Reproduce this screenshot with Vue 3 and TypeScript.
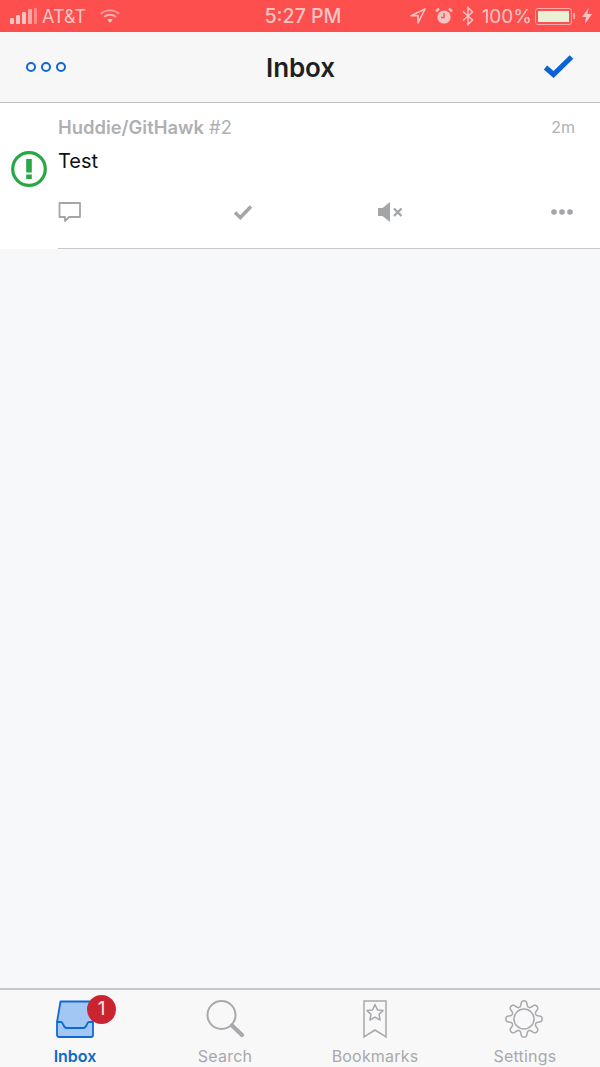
<script setup lang="ts">
const tabs = [
  { key: 'inbox', label: 'Inbox' },
  { key: 'search', label: 'Search' },
  { key: 'bookmarks', label: 'Bookmarks' },
  { key: 'settings', label: 'Settings' },
]

// Outline of an eight-toothed gear, sampled around the circle.
const gearPath = Array.from({ length: 144 }, (_, i) => {
  const a = (i / 144) * Math.PI * 2
  const r = 15.4 + 2.9 * Math.tanh(1.8 * Math.cos(8 * a))
  const x = 19 + r * Math.sin(a)
  const y = 19 - r * Math.cos(a)
  return `${i === 0 ? 'M' : 'L'}${x.toFixed(2)} ${y.toFixed(2)}`
}).join('') + 'Z'
</script>

<template>
  <div class="app">
    <header class="status">
      <div class="status-left">
        <svg class="signal" width="28" height="18" viewBox="0 0 28 18">
          <rect x="1" y="11" width="4" height="6" rx="1" fill="#f4c4c2" />
          <rect x="7" y="8" width="4" height="9" rx="1" fill="#f4c4c2" />
          <rect x="13" y="5" width="4" height="12" rx="1" fill="#f4c4c2" />
          <rect x="19" y="2" width="4" height="15" rx="1" fill="#f4a8a6" />
          <rect x="25" y="1" width="3" height="16" rx="1" fill="#fb8b88" />
        </svg>
        <span class="carrier">AT&amp;T</span>
        <svg class="wifi" width="20" height="16" viewBox="0 0 22 16" fill="none" stroke="#f4c4c2" stroke-width="2">
          <path d="M1 5.500C6.500 .6 15.500 .6 21 5.500" opacity=".7" />
          <path d="M4.500 9C8 5.800 14 5.800 17.500 9" opacity=".85" />
          <path d="M8 12.200C9.800 10.800 12.200 10.800 14 12.200L11 15.500Z" fill="#f4c4c2" stroke="none" />
        </svg>
      </div>
      <div class="status-time">5:27 PM</div>
      <div class="status-right">
        <svg width="16" height="16" viewBox="0 0 16 16" fill="none" stroke="#f4c4c2" stroke-width="1.600"><path d="M15 1 1 7.600h7V15Z" stroke-linejoin="round" /></svg>
        <svg class="alarm" width="18" height="18" viewBox="0 0 18 18">
          <circle cx="9" cy="10" r="6.600" fill="#f4c4c2" />
          <path d="M9 6v4.500h-3" fill="none" stroke="#fd5050" stroke-width="1.400" />
          <path d="M1 4.500 4 1.600M17 4.500 14 1.600" stroke="#f4c4c2" stroke-width="2.400" />
        </svg>
        <svg class="bt" width="12" height="20" viewBox="0 0 12 20" fill="none" stroke="#f4c4c2" stroke-width="1.500"><path d="M1 5.500 10.500 14 6 18.500v-17L10.500 6 1 14.500" /></svg>
        <span class="battery-text">100%</span>
        <div class="battery"><div class="battery-fill"></div></div>
        <div class="battery-tip"></div>
        <svg width="10" height="16" viewBox="0 0 10 16"><path d="M6.500 0 0 9h4l-1 7 7-10H5.500Z" fill="#f4c4c2" /></svg>
      </div>
    </header>

    <nav class="nav">
      <div class="more">
        <span class="ring"></span><span class="ring"></span><span class="ring"></span>
      </div>
      <h1 class="title">Inbox</h1>
      <svg class="done" width="32" height="26" viewBox="0 0 32 26" fill="none" stroke="#0b62d6" stroke-width="5.200">
        <path d="M2.500 13.500 10.500 20.500 28.500 3" />
      </svg>
    </nav>

    <main class="content">
      <article class="row">
        <svg class="issue" width="38" height="38" viewBox="0 0 38 38">
          <circle cx="19" cy="19" r="16.300" fill="none" stroke="#28a745" stroke-width="3.200" />
          <rect x="16.200" y="9" width="5.600" height="13.500" fill="#28a745" />
          <rect x="16.200" y="24.500" width="5.600" height="4.500" fill="#28a745" />
        </svg>
        <div class="row-body">
          <div class="row-head">
            <div class="repo"><strong>Huddie/GitHawk</strong> <span>#2</span></div>
            <time class="age">2m</time>
          </div>
          <div class="subject">Test</div>
          <div class="actions">
            <svg width="24" height="22" viewBox="0 0 24 22" fill="none" stroke="#a3a5a9" stroke-width="1.800">
              <path d="M1.500 2h20.500v14H11l-4 4v-4H1.500Z" stroke-linejoin="round" />
            </svg>
            <svg width="20" height="18" viewBox="0 0 20 18" fill="none" stroke="#a3a5a9" stroke-width="3.500">
              <path d="M2 9.500 7.300 14.500 18 3.500" />
            </svg>
            <svg width="26" height="22" viewBox="0 0 26 22">
              <path d="M1 7h4.500L13 1v20l-7.500-6H1Z" fill="#a3a5a9" />
              <path d="M17 7.500 24.500 15M24.500 7.500 17 15" fill="none" stroke="#a3a5a9" stroke-width="2.400" />
            </svg>
            <svg width="24" height="8" viewBox="0 0 24 8" fill="#a3a5a9">
              <circle cx="4" cy="4" r="2.800" /><circle cx="12" cy="4" r="2.800" /><circle cx="20" cy="4" r="2.800" />
            </svg>
          </div>
        </div>
      </article>
    </main>

    <footer class="tabbar">
      <div v-for="t in tabs" :key="t.key" class="tab" :class="[t.key, { active: t.key === 'inbox' }]">
        <div class="tab-icon">
          <template v-if="t.key === 'inbox'">
            <svg width="40" height="40" viewBox="0 0 40 40">
              <path d="M5.500 2.500H34.500L38 23V30H2V23Z" fill="#a3c7f5" />
              <path d="M2 23 5.500 2.500H34.500L38 23" fill="none" stroke="#1069d3" stroke-width="1.800" stroke-linejoin="round" />
              <path d="M2 23h4c2.500 0 2 6 5.500 6h17c3.500 0 3-6 5.500-6h4v13a2 2 0 0 1-2 2H4a2 2 0 0 1-2-2Z" fill="#a3c7f5" stroke="#1069d3" stroke-width="1.800" stroke-linejoin="round" />
            </svg>
            <span class="badge">1</span>
          </template>
          <svg v-else-if="t.key === 'search'" width="40" height="40" viewBox="0 0 40 40" fill="none" stroke="#a7a9ad">
            <circle cx="16.500" cy="16" r="14" stroke-width="2" />
            <path d="M27 26.500 37 36" stroke-width="4.200" stroke-linecap="round" />
          </svg>
          <svg v-else-if="t.key === 'bookmarks'" width="26" height="40" viewBox="0 0 26 40" fill="none" stroke="#a7a9ad" stroke-width="1.500">
            <path d="M2 2h22v36L13 31 2 38Z" />
            <path d="M13 5.500 15.500 11 21 11.600 17 15.400 18.100 21 13 18.200 7.900 21 9 15.400 5 11.600 10.500 11Z" stroke-linejoin="round" />
          </svg>
          <svg v-else width="38" height="38" viewBox="0 0 38 38" fill="none" stroke="#a7a9ad" stroke-width="1.500" stroke-linejoin="round">
            <circle cx="19" cy="19" r="10" />
            <path :d="gearPath" />
          </svg>
        </div>
        <span class="tab-label">{{ t.label }}</span>
      </div>
    </footer>
  </div>
</template>

<style scoped>
.app {
  width: 600px;
  height: 1067px;
  display: flex;
  flex-direction: column;
  overflow: hidden;
  background: #f6f8fa;
  font-family: Inter, "Liberation Sans", sans-serif;
}
.status {
  flex: 0 0 32px;
  display: grid;
  grid-template-columns: 1fr auto 1fr;
  align-items: center;
  background: #fd4f4e;
  color: #f4c4c2;
  font-size: 18px;
  padding: 0 8px 0 9px;
}
.status-left {
  display: flex;
  align-items: center;
}
.signal { margin-right: 5px; }
.carrier { margin-right: 14px; }
.status-time {
  font-size: 19.600px;
  font-weight: 500;
  margin-left: 5px;
}
.status-right {
  display: flex;
  align-items: center;
  justify-content: flex-end;
}
.alarm { margin-left: 9px; }
.bt { margin-left: 9px; }
.battery-text { margin-left: 8px; font-size: 19px; }
.battery {
  width: 37px;
  height: 17px;
  margin-left: 3px;
  border: 1px solid #f4a8a6;
  border-radius: 3px;
  padding: 2px;
  box-sizing: border-box;
}
.battery-fill {
  height: 100%;
  background: #e9f0d6;
}
.battery-tip {
  width: 2px;
  height: 6px;
  margin: 0 7px 0 1px;
  background: #f4a8a6;
}
.nav {
  flex: 0 0 71px;
  box-sizing: border-box;
  display: grid;
  grid-template-columns: 1fr auto 1fr;
  align-items: center;
  padding: 0 25px 0 26px;
  background: #f7f7f8;
  border-bottom: 1px solid #bdbdc0;
}
.more {
  display: flex;
  gap: 5px;
}
.ring {
  width: 10px;
  height: 10px;
  box-sizing: border-box;
  border: 2px solid #1268d3;
  border-radius: 50%;
}
.title {
  margin: 0;
  font-size: 26px;
  font-weight: 600;
  color: #1e1f21;
  letter-spacing: -0.1px;
}
.done { justify-self: end; }
.content {
  flex: 1;
  min-height: 0;
}
.row {
  display: flex;
  background: #ffffff;
  height: 146px;
  box-sizing: border-box;
}
.issue {
  flex: none;
  margin: 47px 8px 0 10px;
}
.row-body {
  flex: 1;
  min-width: 0;
  box-sizing: border-box;
  margin-left: 2px;
  border-bottom: 1px solid #c9c9cc;
  padding: 14px 25px 0 0;
}
.row-head {
  display: flex;
  justify-content: space-between;
  align-items: center;
  height: 20px;
  color: #aeb0b4;
}
.repo { font-size: 18.400px; }
.repo strong { font-weight: 600; }
.repo span { font-weight: 400; }
.age { font-size: 16px; }
.subject {
  margin-top: 11px;
  font-size: 20px;
  line-height: 26px;
  color: #111;
}
.actions {
  display: grid;
  grid-template-columns: 175px 144px 173px 24px;
  align-items: center;
  margin-top: 25px;
  height: 26px;
}
.tabbar {
  flex: 0 0 79px;
  box-sizing: border-box;
  display: grid;
  grid-template-columns: repeat(4, 1fr);
  border-top: 2px solid #c6c6c9;
  background: #f8f8f9;
}
.tab {
  display: flex;
  flex-direction: column;
  align-items: center;
  padding-top: 9px;
  color: #a7a9ad;
}
.tab.active { color: #1069c4; }
.tab.settings .tab-icon { margin-right: 2px; }
.tab-icon {
  position: relative;
  height: 40px;
  display: flex;
  align-items: center;
  justify-content: center;
}
.tab-label {
  margin-top: 7px;
  font-size: 16px;
  line-height: 20px;
  letter-spacing: .2px;
}
.tab.active .tab-label {
  font-weight: 600;
  letter-spacing: 0;
}
.badge {
  position: absolute;
  top: -4px;
  left: 32px;
  width: 29px;
  height: 29px;
  border-radius: 50%;
  background: #cb2431;
  color: #f6e8e8;
  font-size: 19px;
  line-height: 28px;
  text-align: center;
}
</style>
